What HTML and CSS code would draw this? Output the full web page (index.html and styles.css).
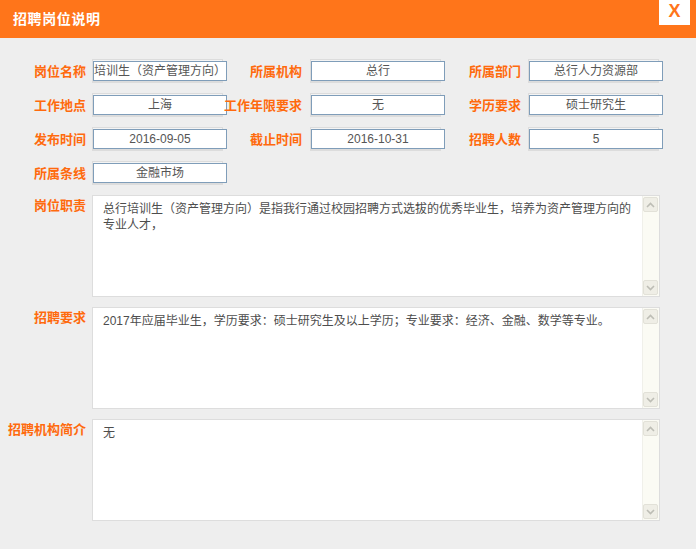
FILE: index.html
```html
<!DOCTYPE html>
<html lang="zh">
<head>
<meta charset="utf-8">
<title>招聘岗位说明</title>
<link rel="stylesheet" href="styles.css">
</head>
<body>
<div class="dialog">
  <div class="header">
    <span class="title">招聘岗位说明</span>
    <span class="close">X</span>
  </div>
  <div class="content">
    <div class="row">
      <span class="lbl w1">岗位名称</span><div class="box m1"><div class="inp">培训生（资产管理方向）</div></div>
      <span class="lbl w2">所属机构</span><div class="box m2"><div class="inp">总行</div></div>
      <span class="lbl w3">所属部门</span><div class="box m3"><div class="inp">总行人力资源部</div></div>
    </div>
    <div class="row">
      <span class="lbl w1">工作地点</span><div class="box m1"><div class="inp">上海</div></div>
      <span class="lbl w2">工作年限要求</span><div class="box m2"><div class="inp">无</div></div>
      <span class="lbl w3">学历要求</span><div class="box m3"><div class="inp">硕士研究生</div></div>
    </div>
    <div class="row">
      <span class="lbl w1">发布时间</span><div class="box m1"><div class="inp">2016-09-05</div></div>
      <span class="lbl w2">截止时间</span><div class="box m2"><div class="inp">2016-10-31</div></div>
      <span class="lbl w3">招聘人数</span><div class="box m3"><div class="inp">5</div></div>
    </div>
    <div class="row">
      <span class="lbl w1">所属条线</span><div class="box m1"><div class="inp">金融市场</div></div>
    </div>

    <div class="trow">
      <span class="lbl tl w1">岗位职责</span>
      <div class="tarea">
        <div class="ttext">总行培训生（资产管理方向）是指我行通过校园招聘方式选拔的优秀毕业生，培养为资产管理方向的专业人才，</div>
        <div class="sbar">
          <div class="sbtn"><svg width="9" height="6" viewBox="0 0 9 6"><path d="M1 5 L4.5 1.5 L8 5" fill="none" stroke="#bdbdb5" stroke-width="1.6"/></svg></div>
          <div class="strack"></div>
          <div class="sbtn"><svg width="9" height="6" viewBox="0 0 9 6"><path d="M1 1 L4.5 4.5 L8 1" fill="none" stroke="#bdbdb5" stroke-width="1.6"/></svg></div>
        </div>
      </div>
    </div>
    <div class="trow">
      <span class="lbl tl w1">招聘要求</span>
      <div class="tarea">
        <div class="ttext">2017年应届毕业生，学历要求：硕士研究生及以上学历；专业要求：经济、金融、数学等专业。</div>
        <div class="sbar">
          <div class="sbtn"><svg width="9" height="6" viewBox="0 0 9 6"><path d="M1 5 L4.5 1.5 L8 5" fill="none" stroke="#bdbdb5" stroke-width="1.6"/></svg></div>
          <div class="strack"></div>
          <div class="sbtn"><svg width="9" height="6" viewBox="0 0 9 6"><path d="M1 1 L4.5 4.5 L8 1" fill="none" stroke="#bdbdb5" stroke-width="1.6"/></svg></div>
        </div>
      </div>
    </div>
    <div class="trow">
      <span class="lbl tl w1">招聘机构简介</span>
      <div class="tarea">
        <div class="ttext">无</div>
        <div class="sbar">
          <div class="sbtn"><svg width="9" height="6" viewBox="0 0 9 6"><path d="M1 5 L4.5 1.5 L8 5" fill="none" stroke="#bdbdb5" stroke-width="1.6"/></svg></div>
          <div class="strack"></div>
          <div class="sbtn"><svg width="9" height="6" viewBox="0 0 9 6"><path d="M1 1 L4.5 4.5 L8 1" fill="none" stroke="#bdbdb5" stroke-width="1.6"/></svg></div>
        </div>
      </div>
    </div>
  </div>
</div>
</body>
</html>
```

FILE: styles.css
```css
* { box-sizing: border-box; }
html, body {
  margin: 0;
  padding: 0;
  background: #eeeeee;
  font-family: "Liberation Sans", "Noto Sans CJK SC", sans-serif;
  font-size: 12px;
  color: #555;
}
.dialog {
  width: 696px;
  height: 549px;
  background: #eeeeee;
}
.header {
  height: 38px;
  background: #ff751a;
  display: flex;
  justify-content: space-between;
  align-items: flex-start;
}
.title {
  margin-left: 13px;
  line-height: 36px;
  font-size: 14px;
  font-weight: bold;
  letter-spacing: 0.6px;
  color: #ffffff;
  font-family: "Noto Sans CJK SC", sans-serif;
}
.close {
  width: 31px;
  height: 25px;
  margin-right: 6px;
  background: #ffffff;
  color: #ff751a;
  font-family: "Liberation Sans", sans-serif;
  font-weight: bold;
  font-size: 18px;
  line-height: 22px;
  text-align: center;
}
.content {
  padding: 21px 0 0 8px;
}
.row {
  display: flex;
  align-items: flex-start;
  height: 24px;
  margin-bottom: 10px;
}
.lbl {
  flex: none;
  font-family: "Noto Sans CJK SC", sans-serif;
  font-size: 13px;
  font-weight: bold;
  color: #ff6a0d;
  text-align: right;
  white-space: nowrap;
  line-height: 20px;
  padding-top: 2px;
}
.lbl.tl { padding-top: 0; line-height: 20px; margin-top: 0; }
.w1 { width: 78px; }
.w2 { width: 79px; }
.w3 { width: 80px; }
.box {
  flex: none;
  width: 131px;
  height: 24px;
  border: 1px solid #dcdcdc;
  border-bottom-width: 2px;
  padding-top: 1px;
  background: #f4f4f4;
}
.m1 { margin-left: 6px; }
.m2 { margin-left: 8px; }
.m3 { margin-left: 7px; }
.inp {
  width: 134px;
  height: 20px;
  border: 1px solid #7f9db9;
  background: #ffffff;
  text-align: center;
  line-height: 18px;
  white-space: nowrap;
  overflow: hidden;
  color: #555;
}
.trow {
  display: flex;
  align-items: flex-start;
  margin-bottom: 10px;
}
.tarea {
  flex: none;
  margin-left: 6px;
  width: 568px;
  height: 102px;
  border: 1px solid #dddddd;
  background: #ffffff;
  display: flex;
  justify-content: space-between;
}
.ttext {
  width: 540px;
  padding: 5px 0 0 10px;
  line-height: 16px;
  color: #4d4d4d;
}
.sbar {
  flex: none;
  width: 17px;
  background: #fbfbf4;
  border-left: 1px solid #f0f0ea;
  display: flex;
  flex-direction: column;
  padding: 1px 1px 1px 0;
}
.sbtn {
  flex: none;
  height: 15px;
  background: #efeee6;
  border: 1px solid #e2e1d8;
  border-radius: 2px;
  display: flex;
  align-items: center;
  justify-content: center;
}
.strack { flex: 1; }
```
